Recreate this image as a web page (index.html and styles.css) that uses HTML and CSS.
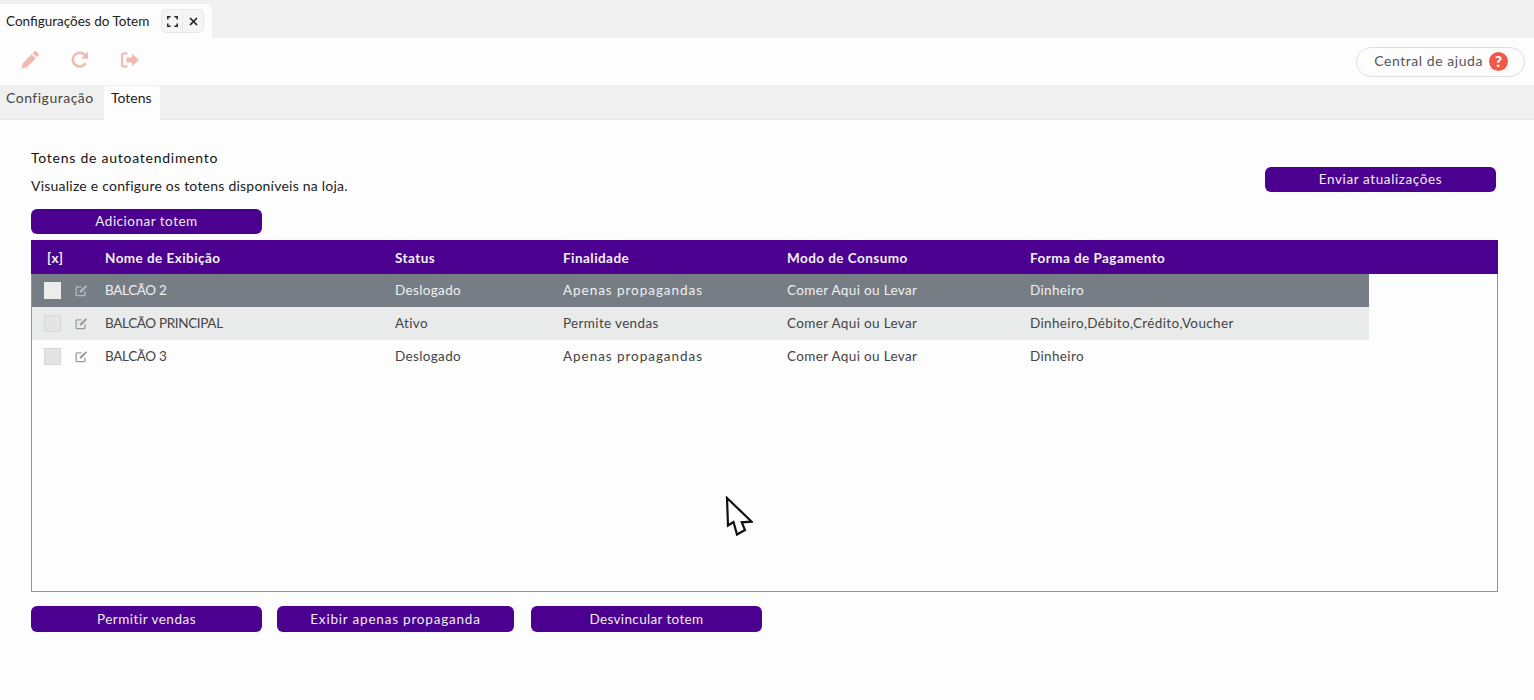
FILE: index.html
```html
<!DOCTYPE html>
<html lang="pt-BR">
<head>
<meta charset="utf-8">
<title>Configurações do Totem</title>
<link rel="stylesheet" href="styles.css">
</head>
<body>
<header class="window-tabs">
  <div class="window-tab">
    <span class="window-title">Configurações do Totem</span>
    <div class="window-actions">
      <span class="window-action">
        <svg width="11" height="11" viewBox="0 0 11 11" fill="none" stroke="#222" stroke-width="1.5"><path d="M.8 3.6V.8h2.8M7.4.8h2.8v2.8M10.2 7.4v2.8H7.4M3.6 10.2H.8V7.4"/></svg>
      </span>
      <span class="window-action">
        <svg width="9" height="9" viewBox="0 0 9 9" fill="none" stroke="#222" stroke-width="1.7"><path d="M1 1l7 7M8 1L1 8"/></svg>
      </span>
    </div>
  </div>
</header>
<nav class="toolbar">
  <div class="tools">
    <svg class="tool" width="20" height="20" viewBox="0 0 20 20" fill="#f2b9b3"><path d="M14.3 1.6a1.6 1.6 0 0 1 2.2 0l1.9 1.900a1.600 1.600 0 0 1 0 2.200l-1.600 1.600-4.100-4.100zM11.600 4.300l4.100 4.100-8.900 8.900-5.200 1.200 1.100-5.300z"/></svg>
    <svg class="tool" width="20" height="20" viewBox="0 0 20 20" fill="none" stroke="#f2b9b3" stroke-width="2.6"><path d="M15.6 13.2A6.9 6.9 0 1 1 15 5.2"/><path d="M18 1.8v6.9h-6.9z" fill="#f2b9b3" stroke="none"/></svg>
    <svg class="tool" width="20" height="20" viewBox="0 0 20 20" fill="#f2b9b3"><path d="M7.5 2.5H3.6A2.6 2.6 0 0 0 1 5.1v9.8a2.6 2.6 0 0 0 2.6 2.6h3.9v-2H3.8a.8.8 0 0 1-.8-.8V5.300a.8.8 0 0 1 .8-.8h3.700z"/><path d="M12 3.800l7 6.200-7 6.200v-3.700H6.500v-5H12z"/></svg>
  </div>
  <button class="help-button" type="button">
    <span class="help-label">Central de ajuda</span>
    <span class="help-icon">?</span>
  </button>
</nav>
<nav class="section-tabs">
  <span class="section-tab">Configuração</span>
  <span class="section-tab active">Totens</span>
</nav>
<main class="content">
  <section class="intro">
    <div class="intro-text">
      <h1 class="title">Totens de autoatendimento</h1>
      <p class="description">Visualize e configure os totens disponíveis na loja.</p>
      <button class="btn btn-add" type="button">Adicionar totem</button>
    </div>
    <button class="btn btn-send" type="button">Enviar atualizações</button>
  </section>
  <section class="table-box">
    <div class="table-head row-grid">
      <span class="head-check">[x]</span>
      <span></span>
      <span>Nome de Exibição</span>
      <span>Status</span>
      <span>Finalidade</span>
      <span>Modo de Consumo</span>
      <span>Forma de Pagamento</span>
    </div>
    <div class="table-body">
      <div class="table-row row-grid selected">
        <span class="check"></span>
        <svg class="edit" width="13" height="13" viewBox="0 0 13 13" fill="none" stroke="currentColor" stroke-width="1.300"><path d="M10 7.500v3a1.200 1.200 0 0 1-1.200 1.200H2.300a1.200 1.200 0 0 1-1.200-1.200V4a1.200 1.200 0 0 1 1.200-1.200h4"/><path d="M5 6.600l5.800-5.300 1.300 1.300-5.400 5.700-2 .4z" fill="currentColor" stroke="none"/></svg>
        <span class="cell name">BALCÃO 2</span><span class="cell">Deslogado</span><span class="cell ads">Apenas propagandas</span><span class="cell">Comer Aqui ou Levar</span><span class="cell">Dinheiro</span>
      </div>
      <div class="table-row row-grid striped">
        <span class="check"></span>
        <svg class="edit" width="13" height="13" viewBox="0 0 13 13" fill="none" stroke="currentColor" stroke-width="1.300"><path d="M10 7.500v3a1.200 1.200 0 0 1-1.200 1.200H2.300a1.200 1.200 0 0 1-1.200-1.200V4a1.200 1.200 0 0 1 1.200-1.200h4"/><path d="M5 6.600l5.800-5.300 1.300 1.300-5.400 5.700-2 .4z" fill="currentColor" stroke="none"/></svg>
        <span class="cell name">BALCÃO PRINCIPAL</span><span class="cell">Ativo</span><span class="cell">Permite vendas</span><span class="cell">Comer Aqui ou Levar</span><span class="cell">Dinheiro,Débito,Crédito,Voucher</span>
      </div>
      <div class="table-row row-grid">
        <span class="check"></span>
        <svg class="edit" width="13" height="13" viewBox="0 0 13 13" fill="none" stroke="currentColor" stroke-width="1.300"><path d="M10 7.500v3a1.200 1.200 0 0 1-1.200 1.200H2.300a1.200 1.200 0 0 1-1.200-1.200V4a1.200 1.200 0 0 1 1.200-1.200h4"/><path d="M5 6.600l5.800-5.300 1.300 1.300-5.400 5.700-2 .4z" fill="currentColor" stroke="none"/></svg>
        <span class="cell name">BALCÃO 3</span><span class="cell">Deslogado</span><span class="cell ads">Apenas propagandas</span><span class="cell">Comer Aqui ou Levar</span><span class="cell">Dinheiro</span>
      </div>
    </div>
  </section>
  <footer class="actions">
    <button class="btn btn-sell" type="button">Permitir vendas</button>
    <button class="btn btn-ads" type="button">Exibir apenas propaganda</button>
    <button class="btn btn-unlink" type="button">Desvincular totem</button>
  </footer>
</main>
<svg class="cursor" width="28" height="42" viewBox="0 0 28 42" fill="#fff" stroke="#111" stroke-width="2.200" stroke-linejoin="miter"><path d="M2 2l1 27.500 5.500-3.500 3.500 12.500 8-4.500-3.300-7.700 10-.6z"/></svg>
</body>
</html>
```
FILE: styles.css
```css
* { box-sizing: border-box; }
html, body { margin: 0; padding: 0; }
body {
  width: 1534px;
  height: 700px;
  overflow: hidden;
  position: relative;
  background: #fdfdfd;
  color: #333;
  font-family: "Lato", "Liberation Sans", sans-serif;
  font-size: 13.5px;
  letter-spacing: 0.35px;
}
.window-tabs { height: 38px; background: #f0f0f0; padding-top: 4px; }
.window-tab {
  width: 212px;
  height: 34px;
  background: #fdfdfd;
  border-radius: 0 6px 0 0;
  display: flex;
  align-items: center;
  padding: 0 8px 0 6px;
  justify-content: space-between;
}
.window-title { color: #222; font-size: 13.5px; letter-spacing: 0; white-space: nowrap; }
.window-actions {
  display: flex;
  width: 43px;
  height: 24px;
  border: 1px solid #e8e8e8;
  border-radius: 5px;
  background: #f5f5f5;
}
.window-action { flex: 1; display: flex; align-items: center; justify-content: center; }
.window-action + .window-action { border-left: 1px solid #e8e8e8; }
.toolbar {
  height: 47px;
  display: flex;
  align-items: center;
  justify-content: space-between;
  padding: 0 9px 0 20px;
  background: #fdfdfd;
}
.tools { display: flex; gap: 30px; align-items: center; margin-bottom: 4px; }
.help-button {
  width: 169px;
  height: 30px;
  margin-top: 1px;
  border: 1px solid #dedede;
  border-radius: 15px;
  background: #fdfdfd;
  color: #555;
  font: inherit;
  font-size: 14px;
  letter-spacing: 0.55px;
  display: flex;
  align-items: center;
  justify-content: flex-end;
  gap: 6px;
  padding: 0 16px 0 0;
}
.help-label { margin-bottom: 3px; }
.help-icon {
  width: 19px;
  height: 19px;
  margin-bottom: 2px;
  border-radius: 50%;
  background: #f0584a;
  color: #fff;
  font-weight: 900;
  font-size: 15px;
  letter-spacing: 0;
  display: flex;
  align-items: center;
  justify-content: center;
}
.section-tabs {
  height: 35px;
  background: #f0f0f0;
  border-bottom: 1px solid #e6e6e6;
  display: flex;
  padding-left: 6px;
}
.section-tab { padding-top: 4px; color: #444; width: 98px; font-size: 14px; letter-spacing: 0.5px; }
.section-tab.active {
  width: 56px;
  margin-top: 1px;
  padding: 3px 0 0 7px;
  height: 35px;
  background: #fdfdfd;
  color: #222;
  border-radius: 4px 4px 0 0;
  letter-spacing: 0;
}
.content { padding: 29px 36px 0 31px; }
.intro { display: flex; justify-content: space-between; height: 91px; }
.title { margin: 0; height: 18px; font-size: 14px; font-weight: 400; line-height: 18px; color: #111; letter-spacing: 0.75px; }
.description { margin: 10px 0 14px; height: 18px; line-height: 18px; color: #222; font-size: 14px; letter-spacing: 0.23px; }
.btn {
  height: 25px;
  border: 0;
  border-radius: 6px;
  background: #4b0090;
  color: #eee;
  font: inherit;
  font-size: 13.5px;
  letter-spacing: 0.5px;
  padding: 0 0 2px;
}
.btn-add { width: 231px; display: block; }
.btn-send { width: 231px; margin: 18px 2px 0 0; letter-spacing: 0.6px; }
.table-box {
  width: 1467px;
  height: 352px;
  border: 1px solid #8c96a3;
  border-top: 0;
}
.row-grid {
  display: grid;
  grid-template-columns: 43px 30px 290px 168px 224px 243px 1fr;
  align-items: center;
}
.table-head {
  height: 34px;
  margin: 0 -1px;
  padding: 2px 0 0 1px;
  background: #4b0090;
  color: #f2f2f2;
  font-weight: 700;
  letter-spacing: 0.45px;
}
.head-check { padding-left: 15px; }
.table-body { width: 1337px; }
.table-row { height: 33px; color: #444; }
.table-row.selected { background: #767d85; color: #f0f0f0; }
.table-row.striped { background: #e9ebeb; }
.cell { padding-bottom: 2px; }
.name { letter-spacing: -0.35px; }
.ads { letter-spacing: 0.95px; }
.check {
  width: 17px;
  height: 17px;
  margin-left: 12px;
  background: #e4e4e4;
  border: 1px solid #d8d8d8;
}
.selected .check { background: #ececec; border-color: #ececec; }
.edit { color: #9b9b9b; }
.selected .edit { color: #b8bcc0; }
.actions { display: flex; margin-top: 14px; }
.actions .btn { height: 26px; padding: 0; }
.btn-sell { width: 231px; margin-right: 15px; }
.btn-ads { width: 237px; margin-right: 17px; letter-spacing: 0.8px; }
.actions .btn-unlink { width: 231px; letter-spacing: 0.35px; }
.cursor { position: absolute; left: 725px; top: 496px; }
```
